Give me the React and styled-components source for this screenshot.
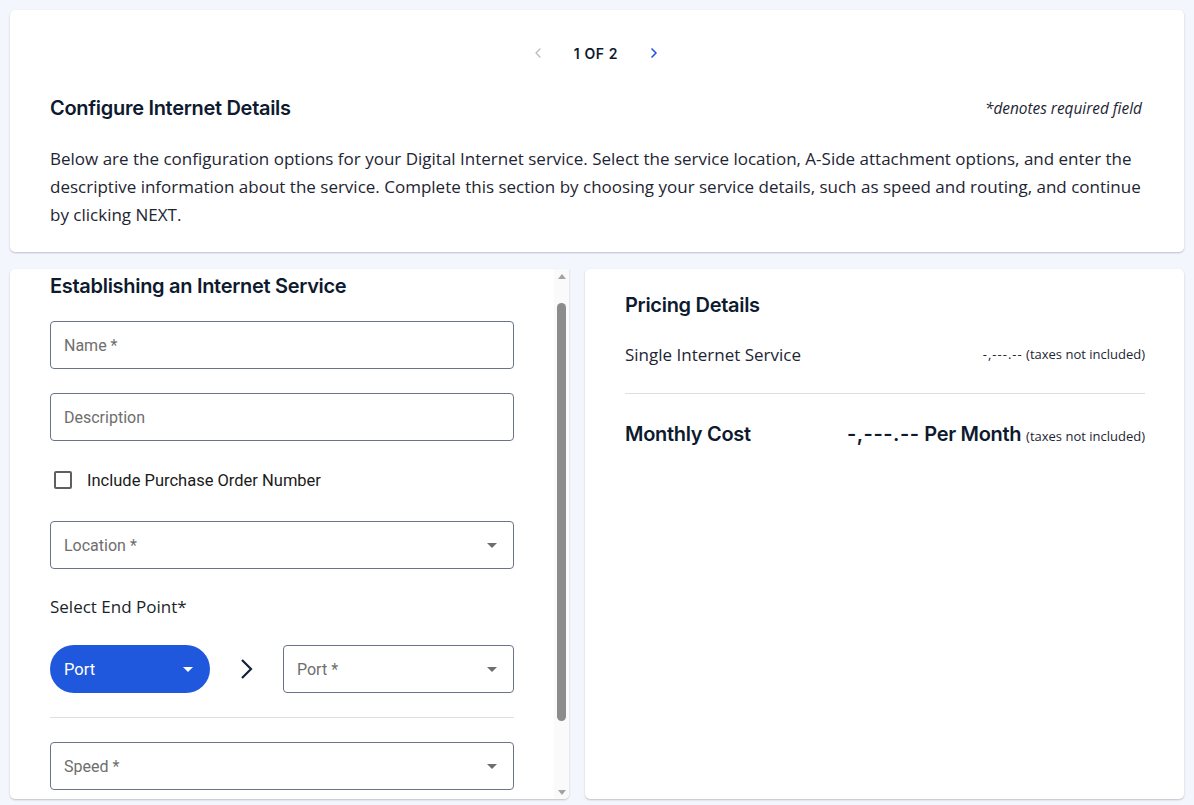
import React from 'react';
import styled, { createGlobalStyle } from 'styled-components';
import { ChevronLeft, ChevronRight } from 'lucide-react';

const GlobalStyle = createGlobalStyle`
  html, body {
    margin: 0;
    padding: 0;
    background: #f3f6fd;
  }
  * {
    box-sizing: border-box;
  }
`;

const Page = styled.div`
  height: 805px;
  padding: 10px 10px 6px 10px;
  display: flex;
  flex-direction: column;
  gap: 17px;
  font-family: "Open Sans", sans-serif;
  color: #1e2533;
  overflow: hidden;
`;

const Card = styled.div`
  background: #ffffff;
  border-radius: 5px;
  box-shadow: 0 1px 2px rgba(0, 0, 0, 0.22);
`;

const IntroCard = styled(Card)`
  padding: 31px 42px 23px 40px;
`;

const Pager = styled.div`
  display: flex;
  justify-content: center;
  align-items: center;
  gap: 28px;
  height: 24px;
`;

const PagerText = styled.span`
  font-family: Inter, sans-serif;
  font-weight: 600;
  font-size: 14px;
  letter-spacing: 0.6px;
  color: #0e1a2f;
`;

const PagerButton = styled.span`
  display: flex;
  color: ${p => (p.$active ? '#1f58dc' : '#b9bcc2')};
`;

const HeaderRow = styled.div`
  display: flex;
  justify-content: space-between;
  align-items: center;
  margin-top: 31px;
  height: 24px;
`;

const Heading = styled.h2`
  margin: 0;
  font-family: Inter, sans-serif;
  font-weight: 600;
  font-size: 20px;
  letter-spacing: -0.3px;
  line-height: 24px;
  color: #0e1a2f;
`;

const RequiredNote = styled.span`
  font-style: italic;
  font-size: 15.4px;
  color: #1e2533;
`;

const Intro = styled.p`
  margin: 25px 0 0 0;
  font-size: 17px;
  line-height: 28px;
  color: #1e2533;
`;

const Columns = styled.div`
  flex: 1;
  display: flex;
  gap: 16px;
  min-height: 0;
`;

const FormCard = styled(Card)`
  width: 559px;
  display: flex;
  overflow: hidden;
  border-radius: 5px 0 5px 5px;
`;

const FormBody = styled.div`
  flex: 1;
  padding: 5px 40px 0 40px;
  display: flex;
  flex-direction: column;
`;

const Field = styled.div`
  height: 48px;
  border: 1px solid #6b7486;
  border-radius: 4px;
  display: flex;
  align-items: center;
  justify-content: space-between;
  padding: 0 16px 0 13px;
  margin-top: ${p => p.$top || 0}px;
  width: ${p => p.$width || 'auto'};
  font-family: Roboto, sans-serif;
  font-size: 16px;
  color: #6e6e6e;
`;

const Caret = styled.span`
  width: 0;
  height: 0;
  border-left: 5px solid transparent;
  border-right: 5px solid transparent;
  border-top: 5px solid ${p => p.$color || '#6e6e6e'};
`;

const CheckRow = styled.label`
  display: flex;
  align-items: center;
  gap: 15px;
  margin-top: 18px;
  height: 42px;
  padding-left: 4px;
  font-family: Roboto, sans-serif;
  font-size: 16.5px;
  color: #1b1b1b;
`;

const Box = styled.span`
  width: 18px;
  height: 18px;
  border: 2px solid #5f5f5f;
  border-radius: 2px;
`;

const Label = styled.div`
  margin-top: 26px;
  font-size: 17px;
  line-height: 24px;
  color: #1b1f29;
`;

const EndpointRow = styled.div`
  display: flex;
  align-items: center;
  margin-top: 26px;
`;

const Pill = styled.div`
  width: 160px;
  height: 48px;
  border-radius: 24px;
  background: #1f58dc;
  color: #ffffff;
  font-family: Roboto, sans-serif;
  font-size: 16.5px;
  display: flex;
  align-items: center;
  justify-content: space-between;
  padding: 0 17px 0 14px;
`;

const Arrow = styled.span`
  width: 73px;
  display: flex;
  justify-content: center;
`;

const Divider = styled.hr`
  border: none;
  border-top: 1px solid #dedfe2;
  margin: ${p => p.$margin};
`;

const Scrollbar = styled.div`
  width: 15px;
  background: #fafafa;
  display: flex;
  flex-direction: column;
  align-items: center;
  padding: 5px 0 4px 0;
`;

const ScrollArrow = styled.span`
  width: 0;
  height: 0;
  border-left: 4px solid transparent;
  border-right: 4px solid transparent;
  ${p => (p.$up ? 'border-bottom: 5px solid #a3a3a3;' : 'border-top: 5px solid #a3a3a3;')}
`;

const Thumb = styled.div`
  width: 9px;
  height: 418px;
  margin-top: 24px;
  border-radius: 5px;
  background: #8c8c8c;
`;

const Track = styled.div`
  flex: 1;
`;

const PriceCard = styled(Card)`
  flex: 1;
  padding: 24px 39px 0 40px;
`;

const PriceRow = styled.div`
  display: flex;
  justify-content: space-between;
  align-items: center;
  margin-top: ${p => p.$top}px;
  height: 24px;
`;

const PriceName = styled.span`
  font-size: 17px;
  color: #1e2533;
`;

const Amount = styled.span`
  font-size: 13px;
  color: #1e2533;
`;

const Dashes = styled.span`
  letter-spacing: ${p => p.$spacing || '1px'};
`;

const BigAmount = styled.span`
  font-family: Inter, sans-serif;
  font-weight: 600;
  font-size: 20px;
  letter-spacing: -0.3px;
  color: #0e1a2f;
`;

const Note = styled.span`
  font-family: "Open Sans", sans-serif;
  font-weight: 400;
  font-size: 13px;
  letter-spacing: 0;
  color: #1e2533;
`;

const App = () => {
  return (
    <>
      <GlobalStyle />
      <Page>
        <IntroCard>
          <Pager>
            <PagerButton><ChevronLeft size={16} strokeWidth={2} /></PagerButton>
            <PagerText>1 OF 2</PagerText>
            <PagerButton $active><ChevronRight size={16} strokeWidth={2.5} /></PagerButton>
          </Pager>
          <HeaderRow>
            <Heading>Configure Internet Details</Heading>
            <RequiredNote>*denotes required field</RequiredNote>
          </HeaderRow>
          <Intro>
            Below are the configuration options for your Digital Internet service. Select the service location, A-Side attachment options, and enter the descriptive information about the service. Complete this section by choosing your service details, such as speed and routing, and continue by clicking NEXT.
          </Intro>
        </IntroCard>
        <Columns>
          <FormCard>
            <FormBody>
              <Heading>Establishing an Internet Service</Heading>
              <Field $top={23}>Name *</Field>
              <Field $top={24}>Description</Field>
              <CheckRow><Box />Include Purchase Order Number</CheckRow>
              <Field $top={20}>Location *<Caret /></Field>
              <Label>Select End Point*</Label>
              <EndpointRow>
                <Pill>Port<Caret $color="#ffffff" /></Pill>
                <Arrow>
                  <svg width="14" height="22" viewBox="0 0 14 22">
                    <polyline points="2,2 11,11 2,20" fill="none" stroke="#14213d" strokeWidth="2.2" />
                  </svg>
                </Arrow>
                <Field $width="231px">Port *<Caret /></Field>
              </EndpointRow>
              <Divider $margin="24px 0 0 0" />
              <Field $top={24}>Speed *<Caret /></Field>
            </FormBody>
            <Scrollbar>
              <ScrollArrow $up />
              <Thumb />
              <Track />
              <ScrollArrow />
            </Scrollbar>
          </FormCard>
          <PriceCard>
            <Heading>Pricing Details</Heading>
            <PriceRow $top={25}>
              <PriceName>Single Internet Service</PriceName>
              <Amount><Dashes>-,---.--</Dashes> (taxes not included)</Amount>
            </PriceRow>
            <Divider $margin="27px 0 0 0" />
            <PriceRow $top={28}>
              <BigAmount>Monthly Cost</BigAmount>
              <BigAmount><Dashes $spacing="0.5px">-,---.--</Dashes> Per Month <Note>(taxes not included)</Note></BigAmount>
            </PriceRow>
          </PriceCard>
        </Columns>
      </Page>
    </>
  );
};

export default App;
